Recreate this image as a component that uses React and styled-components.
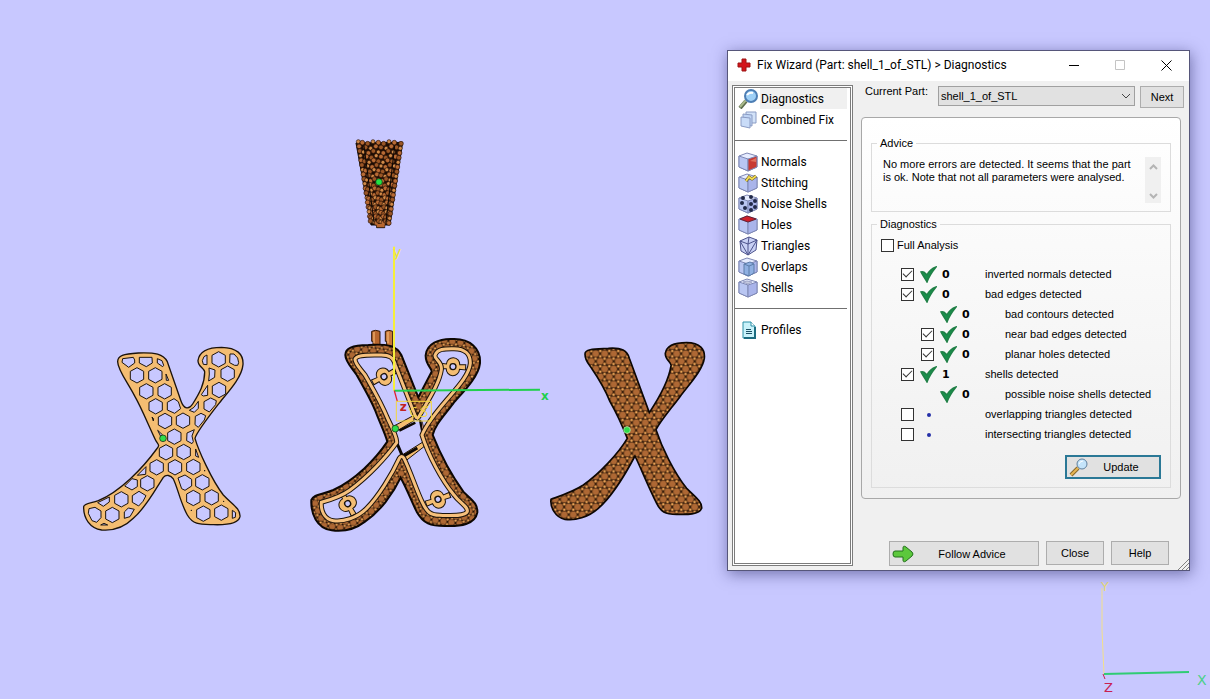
import React, { useState } from "react";

//Styling
import styled, { createGlobalStyle } from "styled-components";

//Data
const tools = [
  { name: "Diagnostics", icon: "magnifier" },
  { name: "Combined Fix", icon: "stack" },
  null,
  { name: "Normals", icon: "normals" },
  { name: "Stitching", icon: "stitching" },
  { name: "Noise Shells", icon: "noise" },
  { name: "Holes", icon: "holes" },
  { name: "Triangles", icon: "triangles" },
  { name: "Overlaps", icon: "overlaps" },
  { name: "Shells", icon: "shells" },
  null,
  { name: "Profiles", icon: "profiles" },
];

const diagnostics = [
  { id: "normals", text: "inverted normals detected", count: 0, box: true },
  { id: "edges", text: "bad edges detected", count: 0, box: true },
  { id: "contours", text: "bad contours detected", count: 0, sub: true },
  { id: "near", text: "near bad edges detected", count: 0, box: true, sub: true },
  { id: "planar", text: "planar holes detected", count: 0, box: true, sub: true },
  { id: "shells", text: "shells detected", count: 1, box: true },
  { id: "noise", text: "possible noise shells detected", count: 0, sub: true },
  { id: "overlap", text: "overlapping triangles detected", box: true },
  { id: "intersect", text: "intersecting triangles detected", box: true },
];

//Centres of the whole honeycomb cells
const cells = [
  [446, 88], [201, 136], [256, 136], [473, 131], [229, 184], [284, 184],
  [447, 180], [257, 229], [285, 273], [339, 272], [313, 320], [288, 367],
  [341, 366], [260, 412], [315, 412], [370, 411], [232, 460], [397, 457],
  [154, 508], [370, 504], [425, 502], [127, 555], [400, 551], [454, 548],
];

//Cells that are cut by the edge of the letter
const cutCells = [
  "158,86 190,82 194,90 194,99 176,112 156,97",
  "208,82 246,82 247,99 229,110 208,99",
  "262,86 276,92 281,106 278,110 262,99",
  "288,132 296,151 289,151",
  "411,75 411,104 400,103 397,92 402,80",
  "480,72 492,72 503,84 506,98 503,106 494,106 479,98",
  "417,114 435,120 434,142 416,153 418,132",
  "413,166 413,196 400,198 394,194",
  "312,206 325,215 332,236 314,250 292,240 292,217",
  "385,214 385,235 373,247 358,241 372,232",
  "422,204 439,212 437,224 418,246 402,237 402,215",
  "376,259 393,250 407,257 403,270 385,292 375,284",
  "246,261 251,266 250,273",
  "263,301 277,314 272,319",
  "351,309 373,299 366,318 370,335 366,341 350,332",
  "377,357 386,382 377,378",
  "228,410 227,433 202,436",
  "186,446 202,450 202,470 186,480 164,468",
  "345,435 365,448 365,468 345,481 335,476 324,444",
  "118,501 118,516 100,529 83,518",
  "207,484 228,497 219,514 206,528 187,517 187,497",
  "75,532 93,543 93,563 80,577 66,572 55,550 57,536",
  "102,580 113,585 92,585",
  "175,534 193,538 180,560 163,565 163,546",
  "487,541 497,548 496,562 487,565",
];

const hexPoints = ([x, y]) =>
  [[0, -23], [20, -12], [20, 12], [0, 23], [-20, 12], [-20, -12]]
    .map(([dx, dy]) => `${x + dx},${y + dy}`)
    .join(" ");

const getBeads = () => {
  const beads = [];
  for (let row = 0; row < 18; row++) {
    const drop = row * 14;
    const half = 64 - (drop * 38) / 248;
    for (let i = 0; i <= 8; i++) {
      const shift = i % 8 ? (row % 2 ? 4 : -4) : 0;
      const x = 119 - half + (2 * half * i) / 8 + shift;
      beads.push({ x, y: 50 + drop + (i % 3) * 3, kind: (row * 2 + i * 5) % 3 });
    }
  }
  return beads;
};

const beadFills = ["#d08a48", "#9a5626", "#b86a34"];

const Honeycomb = () => (
  <g transform="translate(70 330) scale(0.3333)">
    <path
      d="M143 95C143 76 160 72 205 69C255 67 280 72 292 95L333 213C342 240 358 238 368 222C388 190 405 160 404 125C403 114 384 110 384 92C388 62 420 52 455 52C500 53 521 72 519 104C516 140 480 180 455 210C420 255 380 305 375 325C385 360 425 450 460 495C485 522 512 535 510 560C505 585 460 585 430 584C390 583 370 585 352 555C332 520 322 470 310 447C302 435 288 433 280 442C255 480 230 530 190 565C165 590 130 603 95 600C60 595 40 565 41 530C43 520 62 520 85 512C150 485 218 415 260 357C270 346 266 345 258 333C235 285 215 235 195 200C175 160 143 120 143 95Z"
      fill="#f4bd72"
      stroke="#1c130b"
      strokeWidth="4"
    />
    <g fill="#c8c8ff" stroke="#1c130b" strokeWidth="3" strokeLinejoin="round">
      {cells.map((cell) => (
        <polygon key={cell.join()} points={hexPoints(cell)} />
      ))}
      {cutCells.map((points) => (
        <polygon key={points} points={points} />
      ))}
    </g>
    <circle cx="404" cy="422" r="2" />
    <circle cx="461" cy="514" r="2" />
    <circle cx="364" cy="541" r="2" />
    <circle cx="279" cy="325" r="10" fill="#2fdc4a" stroke="#101010" strokeWidth="2" />
  </g>
);

const Hanger = ({ at, turn }) => (
  <g transform={`translate(${at}) rotate(${turn})`}>
    <path
      d="M-38 -8L-20 -7A20 20 0 0 1 20 -7L38 -8V8L20 7A20 20 0 0 1 -20 7L-38 8Z"
      fill="#f4bd72"
      stroke="#1c130b"
      strokeWidth="3"
    />
    <circle r="9" fill="#c8c8ff" stroke="#1c130b" strokeWidth="4" />
  </g>
);

const frame =
  "M165 118C170 104 200 106 240 105C268 104 280 112 286 135L346 288C350 296 354 296 358 288C385 240 418 190 424 150C428 125 402 118 405 106C412 84 440 86 462 86C495 86 512 102 511 130C508 165 470 205 440 240C410 275 378 315 366 345C385 405 425 480 462 525C480 550 505 560 502 575C495 590 450 587 420 586C390 586 380 575 366 545C345 500 330 450 312 415C308 408 302 408 298 415C275 465 235 530 200 565C170 595 130 606 100 602C72 598 62 570 64 547C90 540 120 532 150 510C205 470 260 410 290 368C292 355 280 330 265 300C240 240 215 200 195 165C180 145 165 132 165 118Z";

const FramedLetter = () => (
  <g transform="translate(300 320) scale(0.3333)">
    <g stroke="#2b1709" strokeWidth="3">
      <path d="M215 34Q226 28 240 34V76H219V64H215Z" fill="#b8662e" />
      <path d="M256 34Q266 28 278 34V78H260V64H256Z" fill="#c8793a" />
    </g>
    <path d="M222 36V70M264 36V70" stroke="#f0b070" strokeWidth="4" />
    <path
      d="M136 105C136 85 155 76 205 75C260 71 290 76 304 105L355 232L395 155C397 145 376 135 377 106C380 72 415 55 460 57C510 56 543 85 540 130C535 175 480 225 460 250C430 290 405 315 398 345C420 400 450 460 490 515C515 540 534 550 532 578C525 615 480 619 440 618C390 619 370 610 350 575C335 545 320 505 302 473C280 520 240 575 195 605C165 628 130 636 95 631C50 625 32 580 34 540C42 522 65 525 100 510C165 480 225 420 262 365C255 340 240 310 225 270C210 235 190 200 170 165C155 142 136 125 136 105Z"
      fill="url(#beadsFine)"
      stroke="#0d0703"
      strokeWidth="6"
    />
    <path d={frame} fill="#c8c8ff" />
    <Hanger at="252 170" turn="-27" />
    <Hanger at="459 140" turn="3" />
    <Hanger at="143 551" turn="62" />
    <Hanger at="414 538" turn="-20" />
    <path d="M282 318L342 286V302L286 336Z" fill="#f4bd72" stroke="#1c130b" strokeWidth="3" />
    <path d="M298 332L346 308M360 300L368 340" stroke="#0d0703" strokeWidth="7" />
    <path d="M366 304L374 330L366 345Z" fill="#eeb0a8" stroke="#1c130b" strokeWidth="2" />
    <path d="M308 404L372 364V380L318 422Z" fill="#f4bd72" stroke="#1c130b" strokeWidth="3" />
    <path d="M292 372L308 410L352 384" fill="none" stroke="#0d0703" strokeWidth="9" />
    <path d={frame} fill="none" stroke="#1c130b" strokeWidth="15" />
    <path d={frame} fill="none" stroke="#f6c07c" strokeWidth="9" />
    <path d="M282 -220V212" stroke="#f6ef3a" strokeWidth="6" />
    <path d="M283 212L720 209" stroke="#21cf4e" strokeWidth="6" />
    <path d="M283 212L292 244" stroke="#e02030" strokeWidth="4" />
    <g fill="none" stroke="#f3d73c" strokeWidth="3">
      <path d="M289 244H394V303H289Z" />
      <path d="M350 262Q332 262 332 278Q332 290 350 288M384 262Q364 256 362 270Q388 276 378 288Q366 294 358 286M326 262L340 294M394 244L352 300" />
    </g>
    <circle cx="286" cy="326" r="10" fill="#2fdc4a" stroke="#102010" strokeWidth="2" />
    <AxisName x="278" y="-190" fill="#f0e53a" $size={44}>y</AxisName>
    <AxisName x="723" y="240" fill="#21cf4e" $size={36} $bold>x</AxisName>
    <AxisName x="299" y="273" fill="#c22222" $size={36} $bold>z</AxisName>
  </g>
);

const BeadedLetter = () => (
  <g transform="translate(540 330) scale(0.3333)">
    <path
      d="M135 72C135 56 165 57 205 55C245 52 262 62 268 85L328 248C350 215 385 160 393 108C397 98 375 90 376 70C380 44 410 38 440 38C480 38 496 58 493 85C488 120 450 160 420 200C390 240 360 275 348 299C365 350 400 425 440 475C465 500 487 515 485 535C478 555 440 554 410 553C375 553 362 545 350 520C325 470 305 420 285 378C255 435 215 500 175 535C145 562 105 573 75 568C45 562 30 530 33 508C60 498 100 485 130 465C180 430 235 370 262 325C250 295 230 250 210 215C190 165 165 130 148 105C138 92 135 85 135 72Z"
      fill="url(#beads)"
      stroke="#0d0703"
      strokeWidth="5"
    />
    <circle cx="261" cy="300" r="10" fill="#2fdc4a" stroke="#c0f0c0" strokeWidth="2" />
  </g>
);

const Pendant = () => (
  <g transform="translate(340 125) scale(0.3333)">
    <path
      d="M48 54L188 52L150 300H134V308H110V300H93Z"
      fill="#1c0c04"
      stroke="#0d0703"
      strokeWidth="3"
    />
    {getBeads().map(({ x, y, kind }) => (
      <circle
        key={`${x} ${y}`}
        cx={x}
        cy={y}
        r={kind ? 7 : 6}
        fill={beadFills[kind]}
        stroke="#2a1206"
        strokeWidth="2"
      />
    ))}
    <path d="M72 62L102 292M164 62L138 292" stroke="#0d0703" strokeWidth="3" />
    <path d="M110 297H134V307H110Z" fill="#b8662e" />
    <circle cx="117" cy="171" r="10" fill="#22e244" stroke="#102010" strokeWidth="2" />
  </g>
);

const Beads = () => (
  <>
    <rect width="27" height="46" fill="#1c0c04" />
    {[[0, 0], [27, 0], [13, 23], [0, 46], [27, 46]].map(([x, y]) => (
      <circle key={`${x} ${y}`} cx={x} cy={y} r="11" fill="#ae6834" stroke="#5a2e10" />
    ))}
    {[[13, 8], [0, 15], [27, 15], [0, 31], [27, 31], [13, 38]].map(([x, y]) => (
      <circle key={`${x} ${y}`} cx={x} cy={y} r="5" fill="#eea658" stroke="#3a1c08" strokeWidth="2" />
    ))}
  </>
);

const Scene = () => (
  <Viewport viewBox="0 0 1210 699" role="img" aria-label="Model view">
    <defs>
      <pattern
        id="beads"
        width="27"
        height="46"
        patternUnits="userSpaceOnUse"
        patternTransform="translate(19 2)"
      >
        <Beads />
      </pattern>
      <pattern
        id="beadsFine"
        width="27"
        height="46"
        patternUnits="userSpaceOnUse"
        patternTransform="scale(0.9) rotate(8)"
      >
        <Beads />
      </pattern>
    </defs>
    <Pendant />
    <Honeycomb />
    <FramedLetter />
    <BeadedLetter />
    <g fill="none">
      <path d="M1102 588V630L1104 674" stroke="#f3e08a" />
      <path d="M1104 674L1189 672" stroke="#30cc74" strokeWidth="2" />
      <path d="M1103 674L1105 679" stroke="#c82050" />
    </g>
    <AxisName x="1101" y="591" fill="#e8dc78" $size={13}>Y</AxisName>
    <AxisName x="1197" y="685" fill="#4ad088" $size={14}>X</AxisName>
    <AxisName x="1104" y="692" fill="#c82050" $size={13}>Z</AxisName>
  </Viewport>
);

const Cube = ({ front = "#a9b4ea" }) => (
  <g stroke="#7f88b4" strokeLinejoin="round">
    <path d="M1 4L9 1L19 4V15L10 19L1 15Z" fill="#e6ecff" />
    <path d="M1 4L10 7V19L1 15Z" fill="#b9c6f2" />
    <path d="M10 7L19 4V15L10 19Z" fill={front} />
  </g>
);

const ToolIcon = ({ name }) => {
  switch (name) {
    case "magnifier":
      return (
        <>
          <path d="M2 19L8 12" stroke="#5b6b4c" strokeWidth="4" />
          <path d="M2 18L8 11" stroke="#a9b98a" strokeWidth="2" />
          <circle cx="13" cy="7" r="6" fill="#9fd0f6" stroke="#4d7eb4" strokeWidth="2" />
          <path d="M9 6Q11 3 15 4" stroke="#fff" strokeWidth="2" fill="none" />
        </>
      );
    case "stack":
      return (
        <g stroke="#8b9cc4" strokeLinejoin="round">
          <path d="M8 2H18V13H8Z" fill="#d2e2f8" />
          <path d="M5 4L14 5V16L5 15Z" fill="#bfd4f4" />
          <path d="M3 7L12 8V18L3 16Z" fill="#c9dcf8" />
        </g>
      );
    case "normals":
      return (
        <>
          <Cube front="#c83a32" />
          <path d="M12 9L18 6V10Z" fill="#e0705c" />
        </>
      );
    case "stitching":
      return (
        <>
          <Cube />
          <path d="M8 8L11 4L14 6L18 3" stroke="#6a5a1c" strokeWidth="3" fill="none" />
          <path d="M8 8L11 4L14 6L18 3" stroke="#f4dc50" strokeWidth="2" fill="none" />
        </>
      );
    case "noise":
      return (
        <>
          <Cube />
          <g fill="#222a48">
            <circle cx="5" cy="4" r="2" />
            <circle cx="13" cy="3" r="2" />
            <circle cx="4" cy="9" r="2" />
            <circle cx="7" cy="14" r="2" />
            <circle cx="13" cy="10" r="2" />
            <circle cx="17" cy="7" r="2" />
            <circle cx="13" cy="16" r="2" />
            <circle cx="17" cy="13" r="2" />
          </g>
        </>
      );
    case "holes":
      return (
        <>
          <Cube />
          <path d="M2 4L9 1L18 4L10 7Z" fill="#cf1f2a" stroke="#6b2030" />
        </>
      );
    case "triangles":
      return (
        <g stroke="#4d538c" strokeLinejoin="round">
          <path d="M2 5L11 1L19 4L18 14L10 19L3 15Z" fill="#c8d0f4" />
          <path d="M2 5L10 8L19 4M10 8V19L2 5M10 19L19 4M10 8L11 1" fill="none" />
        </g>
      );
    case "overlaps":
      return (
        <>
          <Cube />
          <path d="M6 7L12 5L16 7V16L11 19L6 17Z" fill="#8fb0e2" stroke="#5c7ca8" />
          <path d="M6 7L11 9V19M11 9L16 7" fill="none" stroke="#5c7ca8" />
        </>
      );
    case "profiles":
      return (
        <>
          <path d="M5 2H13L17 6V18H5Z" fill="#c9f2fa" stroke="#2a8fa6" />
          <path d="M13 2V6H17" fill="#fff" stroke="#2a8fa6" />
          <path d="M17 7V18H6" fill="none" stroke="#1b6c80" strokeWidth="2" />
          <path d="M8 9.5H13M8 11.500H14M8 13.500H14" stroke="#1c5064" />
        </>
      );
    default:
      return (
        <>
          <Cube />
          <path d="M5 4L9 3L14 4L10 6Z" fill="#c6cbe0" stroke="#a0a6c8" />
        </>
      );
  }
};

const App = () => {
  const [active, setActive] = useState("Diagnostics");
  const [checked, setChecked] = useState({
    normals: true,
    edges: true,
    near: true,
    planar: true,
    shells: true,
  });

  //events here
  const toggleHandler = (id) => {
    setChecked({ ...checked, [id]: !checked[id] });
  };

  return (
    <>
      <GlobalStyle />
      <Stage>
        <Scene />
        <Wizard aria-label="Fix Wizard">
          <TitleBar>
            <svg width="14" height="14" viewBox="0 0 14 14" aria-hidden="true">
              <path d="M5 1H9V5H13V9H9V13H5V9H1V5H5Z" fill="#d4141a" stroke="#9c1414" />
            </svg>
            <h1>Fix Wizard (Part: shell_1_of_STL) &gt; Diagnostics</h1>
            <WindowButton aria-label="Minimize">
              <svg width="11" height="11"><path d="M0 5.5H10" stroke="#000" /></svg>
            </WindowButton>
            <WindowButton aria-label="Maximize" disabled>
              <svg width="11" height="11"><path d="M.5 .5H9.5V9.5H.5Z" stroke="#c4c4c4" fill="none" /></svg>
            </WindowButton>
            <WindowButton aria-label="Close window">
              <svg width="11" height="11"><path d="M.5 .5L10.5 10.5M10.5 .5L.5 10.5" stroke="#000" /></svg>
            </WindowButton>
          </TitleBar>

          <Body>
            <Sidebar>
              {tools.map((tool, i) =>
                tool ? (
                  <Tool
                    key={tool.name}
                    $active={tool.name === active}
                    onClick={() => setActive(tool.name)}
                  >
                    <svg width="20" height="20" viewBox="0 0 20 20" aria-hidden="true">
                      <ToolIcon name={tool.icon} />
                    </svg>
                    <span>{tool.name}</span>
                  </Tool>
                ) : (
                  <Divider key={i} />
                )
              )}
            </Sidebar>

            <Main>
              <PartRow>
                <label htmlFor="part">Current Part:</label>
                <Picker>
                  <select id="part">
                    <option>shell_1_of_STL</option>
                  </select>
                  <svg width="10" height="6" aria-hidden="true">
                    <path d="M1 1L5 5L9 1" fill="none" stroke="#444" />
                  </svg>
                </Picker>
                <Button>Next</Button>
              </PartRow>

              <Page>
                <Group>
                  <legend>Advice</legend>
                  <Advice>
                    <p>
                      No more errors are detected. It seems that the part is ok. Note that not all
                      parameters were analysed.
                    </p>
                    <Scroller>
                      <button aria-label="Scroll up">
                        <svg width="9" height="6"><path d="M1 5L4.500 1.500L8 5" /></svg>
                      </button>
                      <button aria-label="Scroll down">
                        <svg width="9" height="6"><path d="M1 1L4.500 4.500L8 1" /></svg>
                      </button>
                    </Scroller>
                  </Advice>
                </Group>

                <Group>
                  <legend>Diagnostics</legend>
                  <FullAnalysis>
                    <Checkbox
                      id="full"
                      checked={!!checked.full}
                      onChange={() => toggleHandler("full")}
                    />
                    <label htmlFor="full">Full Analysis</label>
                  </FullAnalysis>

                  <Results>
                    {diagnostics.map(({ id, text, count, box, sub }) => (
                      <Result key={id} $sub={sub}>
                        {box ? (
                          <Checkbox
                            id={id}
                            checked={!!checked[id]}
                            onChange={() => toggleHandler(id)}
                          />
                        ) : (
                          <i />
                        )}
                        <svg width="18" height="18" viewBox="0 0 18 18" aria-hidden="true">
                          {count === undefined ? (
                            <circle cx="10" cy="10" r="2" fill="#2530a8" />
                          ) : (
                            <path
                              d="M2 7C5 6 6 8 8 10C10 6 14 3 17 2C13 7 10 11 8 17C6 13 4 11 2 7Z"
                              fill="#17904c"
                              stroke="#1f8046"
                              strokeWidth="1.500"
                            />
                          )}
                        </svg>
                        <b>{count}</b>
                        {box ? <label htmlFor={id}>{text}</label> : <span>{text}</span>}
                      </Result>
                    ))}
                  </Results>

                  <UpdateButton>
                    <svg width="20" height="20" viewBox="0 0 20 20" aria-hidden="true">
                      <path d="M2 18L9 11" stroke="#8a6a2c" strokeWidth="4" />
                      <path d="M2 18L9 11" stroke="#e6b552" strokeWidth="2" />
                      <circle cx="13" cy="7" r="5" fill="#c4e4fa" stroke="#5f7f9c" />
                      <path d="M10 7Q11 4 14 4" stroke="#fff" fill="none" />
                    </svg>
                    <span>Update</span>
                  </UpdateButton>
                </Group>
              </Page>

              <Footer>
                <FollowButton>
                  <svg width="22" height="18" viewBox="0 0 22 18" aria-hidden="true">
                    <path
                      d="M3 6H11V3Q11 0 14 2L20 7Q22 9 20 11L14 16Q11 18 11 15V12H3Q1 12 1 9Q1 6 3 6Z"
                      fill="#5cc83c"
                      stroke="#22701c"
                    />
                  </svg>
                  <span>Follow Advice</span>
                </FollowButton>
                <Button>Close</Button>
                <Button>Help</Button>
              </Footer>
            </Main>
          </Body>
          <Grip width="12" height="12" aria-hidden="true">
            <path d="M1 12L12 1M5 12L12 5M9 12L12 9" stroke="#808080" />
          </Grip>
        </Wizard>
      </Stage>
    </>
  );
};

const GlobalStyle = createGlobalStyle`
  * {
    box-sizing: border-box;
    margin: 0;
    padding: 0;
  }

  body {
    background: #c8c8ff;
    color: #000;
    font-family: "Liberation Sans", Arial, sans-serif;
    font-size: 11px;
  }

  button, select {
    font: inherit;
    color: inherit;
  }
`;

const Stage = styled.main`
  position: relative;
  min-height: 100vh;
  overflow: hidden;
`;

const Viewport = styled.svg`
  display: block;
  width: 100%;
  height: 100vh;
`;

const AxisName = styled.text`
  font-family: "DejaVu Sans", sans-serif;
  font-size: ${({ $size }) => $size}px;
  font-weight: ${({ $bold }) => ($bold ? 700 : 400)};
`;

const Wizard = styled.section`
  position: absolute;
  top: 50px;
  right: 20px;
  width: 463px;
  background: #f0f0f0;
  border: 1px solid #56567a;
  box-shadow: 1px 3px 14px rgba(30, 30, 90, 0.5);
`;

const TitleBar = styled.header`
  display: flex;
  align-items: center;
  height: 30px;
  padding: 0 0 2px 9px;
  background: #fff;

  h1 {
    flex: 1;
    margin-left: 6px;
    font: 400 12px Roboto, sans-serif;
    white-space: nowrap;
  }
`;

const WindowButton = styled.button`
  display: flex;
  align-items: center;
  justify-content: center;
  width: 46px;
  height: 28px;
  border: none;
  background: none;
`;

const Body = styled.div`
  display: flex;
  gap: 8px;
  padding: 4px 5px 4px 4px;
`;

const Sidebar = styled.nav`
  width: 121px;
  padding-right: 3px;
  background: #fff;
  border: 3px double #7c7c7c;
`;

const Tool = styled.button`
  display: flex;
  align-items: center;
  gap: 2px;
  width: 100%;
  height: 21px;
  padding-left: 3px;
  border: none;
  background: none;
  font: 400 12px Roboto, sans-serif;
  text-align: left;

  span {
    flex: 1;
    padding: 2px 0 1px 1px;
    line-height: 18px;
    background: ${({ $active }) => ($active ? "#f0f0f0" : "transparent")};
  }
`;

const Divider = styled.hr`
  height: 21px;
  border: none;
  background: linear-gradient(#707070, #707070) center / 100% 1px no-repeat;
`;

const Main = styled.div`
  flex: 1;
  display: flex;
  flex-direction: column;
`;

const PartRow = styled.div`
  display: flex;
  align-items: flex-start;
  gap: 5px;
  height: 22px;
  margin: 1px 0 9px;

  label {
    width: 68px;
    margin-left: 4px;
    line-height: 10px;
  }
`;

const Picker = styled.div`
  flex: 1;
  position: relative;

  select {
    display: block;
    width: 100%;
    height: 20px;
    padding-left: 2px;
    appearance: none;
    background: #e1e1e1;
    border: 1px solid #a0a0a0;
    border-radius: 0;
  }

  svg {
    position: absolute;
    top: 7px;
    right: 4px;
    pointer-events: none;
  }
`;

const Button = styled.button`
  min-width: 44px;
  height: 22px;
  background: #e1e1e1;
  border: 1px solid #adadad;
`;

const Page = styled.div`
  display: flex;
  flex-direction: column;
  gap: 5px;
  margin-right: 3px;
  padding: 18px 9px 10px;
  background: linear-gradient(#fff, #f0f0f0);
  border: 1px solid #a8a8a8;
  border-radius: 4px;
`;

const Group = styled.fieldset`
  border: 1px solid #dcdcdc;
  padding-bottom: 8px;

  legend {
    margin-left: 5px;
    padding: 0 3px;
    line-height: 14px;
  }
`;

const Advice = styled.div`
  display: flex;
  justify-content: space-between;
  padding: 7px 9px 0 11px;

  p {
    width: 256px;
    margin-top: 1px;
    line-height: 13px;
  }
`;

const Scroller = styled.div`
  display: flex;
  flex-direction: column;
  justify-content: space-between;
  width: 16px;
  height: 46px;
  background: #f0f0f0;

  button {
    height: 17px;
    border: none;
    background: none;
  }

  path {
    fill: none;
    stroke: #b4b4b4;
    stroke-width: 2;
  }
`;

const FullAnalysis = styled.div`
  display: flex;
  align-items: center;
  gap: 3px;
  height: 14px;
  margin: 7px 0 0 9px;
`;

const Checkbox = styled.input.attrs({ type: "checkbox" })`
  display: grid;
  place-items: center;
  width: 13px;
  height: 13px;
  appearance: none;
  background: #fff;
  border: 1px solid #333;

  &:checked::after {
    content: "";
    width: 4px;
    height: 8px;
    margin-top: -3px;
    border: solid #333;
    border-width: 0 1px 1px 0;
    transform: rotate(45deg);
  }
`;

const Results = styled.div`
  margin-top: 12px;
`;

const Result = styled.div`
  display: grid;
  grid-template-columns: 13px 18px 38px 1fr;
  align-items: center;
  column-gap: 5px;
  height: 20px;
  padding-left: ${({ $sub }) => ($sub ? 49 : 29)}px;

  b {
    font: 700 11px "DejaVu Sans", sans-serif;
  }
`;

const UpdateButton = styled(Button)`
  display: flex;
  align-items: center;
  width: 96px;
  height: 24px;
  margin: 11px 9px 0 auto;
  padding: 0 6px 0 2px;
  border: 2px solid #2a7896;

  span {
    flex: 1;
  }
`;

const Footer = styled.footer`
  display: flex;
  justify-content: flex-end;
  gap: 7px;
  margin: 42px 15px 0 0;

  button {
    width: 58px;
    height: 24px;
  }
`;

const FollowButton = styled(Button)`
  && {
    display: flex;
    align-items: center;
    width: 150px;
    height: 25px;
    padding: 0 8px 0 2px;
  }

  span {
    flex: 1;
  }
`;

const Grip = styled.svg`
  position: absolute;
  right: 0;
  bottom: 0;
`;

export default App;
